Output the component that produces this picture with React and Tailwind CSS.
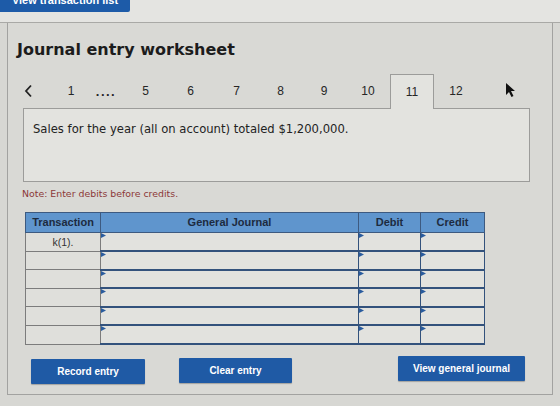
import React from 'react';

// Question tabs along the top of the worksheet
const tabs = [
  { label: '1', w: 'w-[34px]' },
  { label: '....', w: 'w-[36px]', dots: true },
  { label: '5', w: 'w-[43px]' },
  { label: '6', w: 'w-[47px]' },
  { label: '7', w: 'w-[45px]' },
  { label: '8', w: 'w-[43px]' },
  { label: '9', w: 'w-[44px]' },
  { label: '10', w: 'w-[44px]' },
  { label: '11', w: 'w-[44px]', active: true },
  { label: '12', w: 'w-[44px]' },
];

const rows = ['k(1).', '', '', '', '', ''];

const Flag = () => (
  <svg className="absolute left-0 top-0" width="5" height="6" viewBox="0 0 5 6">
    <polygon points="0,0 5,2.5 0,5" fill="#2a5c9e" />
  </svg>
);

const BlueButton = ({ children, className }) => (
  <button
    className={`h-[25px] bg-[#1f5aa5] text-white text-[10px] font-bold rounded-[1px] shadow-[0_1px_1px_rgba(0,0,0,0.25)] ${className}`}
    style={{ fontFamily: '"Liberation Sans", Arial, sans-serif' }}
  >
    {children}
  </button>
);

export default function App() {
  return (
    <div className="w-[560px] h-[406px] bg-[#d7d7d3] overflow-hidden relative" style={{ fontFamily: '"DejaVu Sans", Verdana, sans-serif' }}>
      {/* top strip with the cut-off list button */}
      <div className="h-[23px] bg-[#e4e4e1] border-b border-[#a9a9a6]">
        <div className="w-[130px] h-[12px] bg-[#1d5ba8] rounded-br-[2px] overflow-hidden flex justify-center">
          <span className="text-white text-[11px] font-bold leading-[12px] -mt-[6px]" style={{ fontFamily: '"Liberation Sans", Arial, sans-serif' }}>
            View transaction list
          </span>
        </div>
      </div>

      {/* worksheet panel */}
      <div className="ml-[7px] w-[546px] h-[372px] border-x border-b border-[#a2a2a0] bg-[#d9d9d5] flex flex-col">
        <h1 className="mt-[17px] ml-[9px] text-[16px] font-bold text-[#1c1c1c] leading-[20px]">Journal entry worksheet</h1>

        {/* tabs */}
        <div className="mt-[14px] ml-[15px] flex items-stretch h-[34px] text-[12px] text-[#262626]" style={{ fontFamily: '"Liberation Sans", Arial, sans-serif' }}>
          <div className="w-[31px] flex items-center justify-start pl-[1px]">
            <svg width="9" height="14" viewBox="0 0 9 14">
              <polyline points="7,1.5 2,7 7,12.5" fill="none" stroke="#222" strokeWidth="1.8" />
            </svg>
          </div>
          {tabs.map((t) => (
            <div
              key={t.label}
              className={`${t.w} flex items-center justify-center ${t.active ? 'bg-[#e3e3df] border-x border-t border-[#9c9c9a] relative z-10 -mb-[1px]' : ''} ${t.dots ? 'font-bold text-[13px] tracking-[1.5px] pt-[2px]' : ''}`}
            >
              {t.label}
            </div>
          ))}
        </div>

        {/* transaction text */}
        <div className="ml-[15px] w-[507px] h-[74px] border border-[#9c9c9a] bg-[#e3e3df] pl-[9px] pt-[12px]">
          <p className="text-[11.6px] text-[#222] leading-[16px]">Sales for the year (all on account) totaled $1,200,000.</p>
        </div>

        <p className="ml-[14px] mt-[6px] text-[9.4px] text-[#8c3838] leading-[12px]">Note: Enter debits before credits.</p>

        {/* journal table */}
        <table className="ml-[17px] mt-[12px] w-[460px] border-collapse" style={{ fontFamily: '"Liberation Sans", Arial, sans-serif' }}>
          <thead>
            <tr className="h-[20px] bg-[#5f95cd] text-[11px] font-bold text-[#1d2b40]">
              <th className="w-[75px] border border-[#3d5a80] font-bold">Transaction</th>
              <th className="w-[258px] border border-[#3d5a80] font-bold">General Journal</th>
              <th className="w-[62px] border border-[#3d5a80] font-bold">Debit</th>
              <th className="w-[64px] border border-[#3d5a80] font-bold">Credit</th>
            </tr>
          </thead>
          <tbody>
            {rows.map((r, i) => (
              <tr key={i} className="h-[18.6px]">
                <td className="border border-[#7c7c7c] bg-[#dfdfdb] text-center text-[10.5px] text-[#333] leading-[12px]">{r}</td>
                <td className="relative border-x border-[#33527c] border-b-2 bg-[#e2e2de] p-0"><Flag /></td>
                <td className="relative border-x border-[#33527c] border-b-2 bg-[#e2e2de] p-0"><Flag /></td>
                <td className="relative border-x border-[#33527c] border-b-2 bg-[#e2e2de] p-0"><Flag /></td>
              </tr>
            ))}
          </tbody>
        </table>

        {/* actions */}
        <div className="mt-[13px] flex items-start">
          <BlueButton className="ml-[23px] w-[114px] mt-[1px]">Record entry</BlueButton>
          <BlueButton className="ml-[34px] w-[113px]">Clear entry</BlueButton>
          <BlueButton className="ml-[106px] w-[127px] -mt-[2px]">View general journal</BlueButton>
        </div>
      </div>

      {/* mouse pointer */}
      <svg className="absolute left-[504px] top-[82px]" width="12" height="16" viewBox="0 0 12 16">
        <polygon points="2,1 2,13 5,10 7.5,15 9.5,14 7,9 11,9" fill="#111" />
      </svg>
    </div>
  );
}
